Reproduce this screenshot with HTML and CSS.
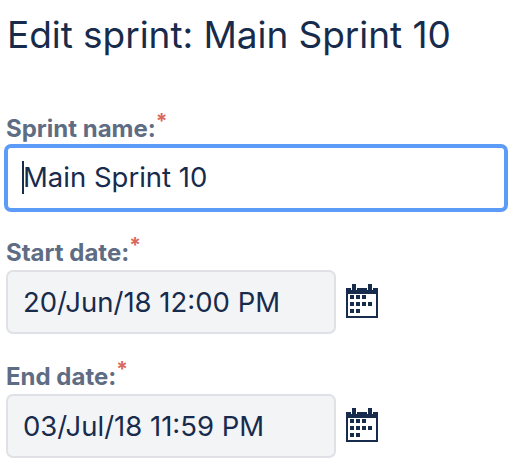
FILE: index.html
```
<!DOCTYPE html>
<html lang="en">
<head>
<meta charset="utf-8">
<title>Edit sprint</title>
<link rel="stylesheet" href="styles.css">
</head>
<body>
<h1 class="title">Edit sprint: Main Sprint 10</h1>
<form class="form">
  <div class="field field-name">
    <div class="label">Sprint name:<span class="req">*</span></div>
    <div class="input focused"><span class="caret"></span>Main Sprint 10</div>
  </div>
  <div class="field">
    <div class="label">Start date:<span class="req">*</span></div>
    <div class="date-row">
      <div class="input date">20/Jun/18 12:00 PM</div>
      <svg class="cal" viewBox="0 0 32 34" width="32" height="34"><path fill="#172b4d" d="M6 0h4v6H6zM22 0h4v6h-4zM0 4h5v2h6V4h10v2h6V4h5v30H0z"/><path fill="#fff" d="M2 10h28v22H2z"/><path fill="#172b4d" d="M4 11h4v4H4zM10 11h4v4h-4zM16 11h4v4h-4zM4 18h4v4H4zM10 18h4v4h-4zM16 18h4v4h-4zM22 18h4v4h-4zM4 25h4v4H4zM10 25h4v4h-4z"/></svg>
    </div>
  </div>
  <div class="field">
    <div class="label">End date:<span class="req">*</span></div>
    <div class="date-row">
      <div class="input date">03/Jul/18 11:59 PM</div>
      <svg class="cal" viewBox="0 0 32 34" width="32" height="34"><path fill="#172b4d" d="M6 0h4v6H6zM22 0h4v6h-4zM0 4h5v2h6V4h10v2h6V4h5v30H0z"/><path fill="#fff" d="M2 10h28v22H2z"/><path fill="#172b4d" d="M4 11h4v4H4zM10 11h4v4h-4zM16 11h4v4h-4zM4 18h4v4H4zM10 18h4v4h-4zM16 18h4v4h-4zM22 18h4v4h-4zM4 25h4v4H4zM10 25h4v4h-4z"/></svg>
    </div>
  </div>
</form>
</body>
</html>
```
FILE: styles.css
```
html, body { margin: 0; padding: 0; background: #fff; }
body { font-family: "Inter", "Liberation Sans", sans-serif; color: #172b4d; width: 526px; height: 470px; overflow: hidden; }
.title { margin: 0; padding: 13px 0 0 7px; font-size: 37px; line-height: 44px; font-weight: 400; letter-spacing: -0.05px; }
.form { padding: 58px 0 0 4px; display: flex; flex-direction: column; }
.field { margin-bottom: 29px; }
.field-name { margin-bottom: 27px; }
.label { font-size: 24px; line-height: 28px; font-weight: 700; color: #5e6c84; padding-left: 2px; margin-bottom: 3px; }
.req { color: #d9695c; position: relative; top: -8px; font-size: 21px; line-height: 0; }
.input { box-sizing: border-box; font-size: 27.5px; display: flex; align-items: center; border-radius: 7px; }
.focused { width: 504px; height: 68px; margin-top: -2px; border: 4px solid #5c9bf7; padding: 0 0 2px 14px; background: #fff; }
.caret { width: 2px; height: 33px; margin-right: -1px; background: #172b4d; }
.date-row { display: flex; align-items: flex-start; gap: 10px; }
.date { width: 330px; height: 64px; margin-left: 2px; background: #f3f4f6; border: 2px solid #dfe1e6; padding: 0 0 1px 15px; }
.cal { flex: none; margin-top: 14px; }
```
